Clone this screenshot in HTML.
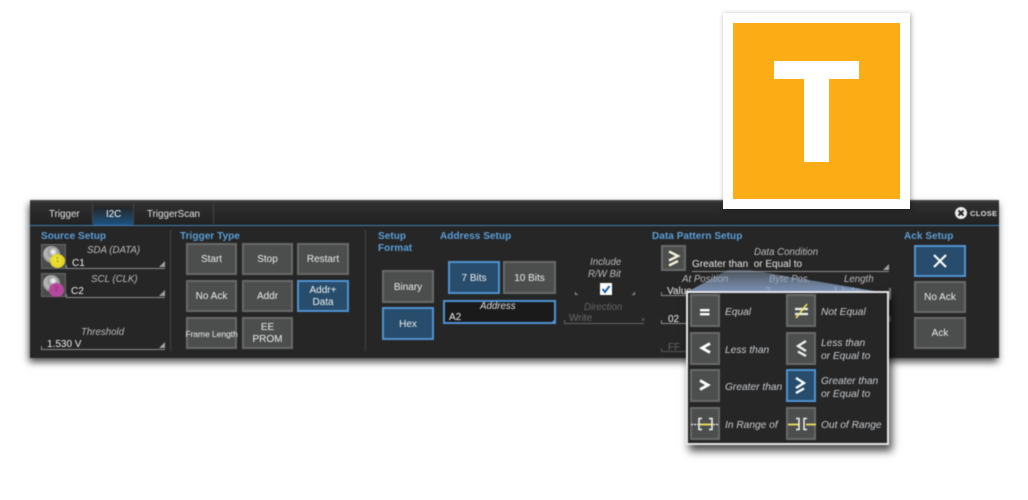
<!DOCTYPE html>
<html><head><meta charset="utf-8">
<style>
html,body{margin:0;padding:0;background:#fff}
body{width:1028px;height:500px;overflow:hidden;position:relative;font-family:"Liberation Sans",sans-serif}
div,span{position:absolute;box-sizing:border-box}
#blur{left:0;top:0;width:1028px;height:500px;filter:blur(.5px)}
.panel{left:30px;top:200px;width:969px;height:158px;background:#262626;box-shadow:-1px 4px 7px rgba(0,0,0,.7)}
.tabbar{left:30px;top:200px;width:969px;height:26px;background:linear-gradient(#4a4a4a,#303030 12%,#272727 60%,#222);border-bottom:1px solid #3f7fb5}
.t{white-space:nowrap;font-size:9.8px;color:#e4e4e4;line-height:12px;margin-top:1px}
.h{white-space:nowrap;font-size:10px;font-weight:bold;color:#5a9fd8;line-height:12px;letter-spacing:.05px;margin-top:1px}
.l{white-space:nowrap;font-size:9.7px;font-style:italic;color:#bbb;line-height:12px;text-align:center;margin-top:1px}
.v{white-space:nowrap;font-size:10px;color:#f0f0f0;line-height:12px;margin-top:1px}
.b{background:#4c4e4e;border:2px solid #686a6a;color:#ececec;font-size:10px;line-height:12px;padding-top:2px;display:flex;align-items:center;justify-content:center;text-align:center;white-space:pre}
.a{background:#284d6c;border:2px solid #5092d2;color:#f0f0f0}
.u{height:4px;border-left:1px solid #8c8c8c;border-bottom:1px solid #8c8c8c}
.c{width:0;height:0;border-left:6px solid transparent;border-bottom:6px solid #a0a0a0}
.sep{width:1px;background:#454545}
.pl{white-space:nowrap;font-size:10.2px;font-style:italic;color:#c8ccd0;line-height:13px;margin-top:1px}
.g{font-size:16px;font-weight:bold;color:#fff}
.n{font-size:7px;color:#a08a10;line-height:8px;text-align:center}
</style></head><body>
<div id="blur">
<div class="panel"></div>
<div class="tabbar"></div>
<div style="left:93px;top:207px;width:40px;height:18px;background:linear-gradient(#252525,#1d5485)"></div>
<div class="sep" style="left:92px;top:203px;height:21px"></div>
<div class="sep" style="left:133px;top:203px;height:21px"></div>
<div class="sep" style="left:213px;top:203px;height:21px"></div>
<span class="t" style="left:49px;top:208px">Trigger</span>
<span class="t" style="left:106px;top:208px;color:#fff">I2C</span>
<span class="t" style="left:147px;top:208px">TriggerScan</span>
<svg style="position:absolute;left:955px;top:207px" width="13" height="13"><circle cx="6" cy="6" r="6" fill="#eee"/><path d="M3.5 3.5l5 5M8.5 3.5l-5 5" stroke="#222" stroke-width="2"/></svg>
<span style="left:970px;top:209px;font-size:7.5px;font-weight:bold;color:#ddd;line-height:10px;letter-spacing:.3px">CLOSE</span>

<span class="h" style="left:41px;top:230px">Source Setup</span>
<span class="h" style="left:180px;top:230px">Trigger Type</span>
<span class="h" style="left:378px;top:230px">Setup</span>
<span class="h" style="left:378px;top:242px">Format</span>
<span class="h" style="left:440px;top:230px">Address Setup</span>
<span class="h" style="left:652px;top:230px">Data Pattern Setup</span>
<span class="h" style="left:904px;top:230px">Ack Setup</span>
<div class="sep" style="left:170px;top:230px;height:121px"></div>
<div class="sep" style="left:365px;top:230px;height:121px"></div>

<!-- source -->
<div style="left:41px;top:244px;width:25px;height:25px;background:#4a4c4c;border:1px solid #666"></div>
<div style="left:43px;top:246px;width:17px;height:17px;border-radius:50%;background:radial-gradient(circle at 60% 35%,#eee 8%,#999 30%,#bbb 55%,#666 90%)"></div>
<div class="n" style="left:50px;top:254px;width:15px;height:14px;border-radius:50%;background:radial-gradient(circle at 45% 45%,#f2e93a,#d8c61a);padding-top:3px">1</div>
<div style="left:41px;top:273px;width:25px;height:24px;background:#4a4c4c;border:1px solid #666"></div>
<div style="left:43px;top:275px;width:17px;height:17px;border-radius:50%;background:radial-gradient(circle at 60% 35%,#eee 8%,#999 30%,#bbb 55%,#666 90%)"></div>
<div class="n" style="left:49px;top:283px;width:15px;height:14px;border-radius:50%;background:#b8489f;padding-top:3px;color:#7c2c6c">2</div>
<span class="l" style="left:87px;top:244px">SDA (DATA)</span>
<span class="v" style="left:72px;top:257px">C1</span>
<div class="u" style="left:66px;top:265px;width:99px"></div>
<div class="c" style="left:159px;top:261px"></div>
<span class="l" style="left:91px;top:273px">SCL (CLK)</span>
<span class="v" style="left:71px;top:285px">C2</span>
<div class="u" style="left:66px;top:294px;width:99px"></div>
<div class="c" style="left:159px;top:290px"></div>
<span class="l" style="left:81px;top:326px">Threshold</span>
<span class="v" style="left:47px;top:338px">1.530 V</span>
<div class="u" style="left:41px;top:346px;width:124px"></div>
<div class="c" style="left:159px;top:342px"></div>

<!-- trigger type -->
<div class="b" style="left:186px;top:243px;width:51px;height:32px">Start</div>
<div class="b" style="left:242px;top:243px;width:51px;height:32px">Stop</div>
<div class="b" style="left:297px;top:243px;width:52px;height:32px">Restart</div>
<div class="b" style="left:186px;top:280px;width:51px;height:32px">No Ack</div>
<div class="b" style="left:242px;top:280px;width:51px;height:32px">Addr</div>
<div class="b a" style="left:297px;top:280px;width:52px;height:32px">Addr+
Data</div>
<div class="b" style="left:186px;top:317px;width:51px;height:32px;font-size:8.6px;letter-spacing:-.1px">Frame Length</div>
<div class="b" style="left:242px;top:317px;width:51px;height:32px">EE
PROM</div>

<!-- format -->
<div class="b" style="left:382px;top:270px;width:52px;height:33px">Binary</div>
<div class="b a" style="left:382px;top:307px;width:52px;height:33px">Hex</div>
<div class="b a" style="left:448px;top:261px;width:52px;height:33px">7 Bits</div>
<div class="b" style="left:503px;top:261px;width:53px;height:33px">10 Bits</div>
<div style="left:443px;top:300px;width:113px;height:24px;background:#1a1a1a;border:2px solid #5092d2"></div>
<div class="c" style="left:550px;top:318px;border-bottom-color:#5092d2"></div>
<span class="l" style="left:480px;top:300px;color:#e0e0e0">Address</span>
<span class="v" style="left:449px;top:311px">A2</span>

<span class="l" style="left:590px;top:256px">Include</span>
<span class="l" style="left:588px;top:268px">R/W Bit</span>
<div style="left:600px;top:283px;width:12px;height:12px;background:#fff"></div>
<svg style="position:absolute;left:600px;top:283px" width="12" height="12"><path d="M2.5 6l2.5 3 4.5-6" fill="none" stroke="#1c5fa8" stroke-width="2"/></svg>
<div style="left:575px;top:292px;width:3px;height:3px;border-left:1px solid #999;border-bottom:1px solid #999"></div>
<div style="left:632px;top:292px;width:3px;height:3px;border-right:1px solid #999;border-bottom:1px solid #999"></div>
<span class="l" style="left:584px;top:301px;color:#666">Direction</span>
<span class="t" style="left:569px;top:312px;color:#6a6a6a;font-size:10px">Write</span>
<div class="u" style="left:564px;top:320px;width:80px;border-color:#666"></div>
<span style="left:641px;top:317px;font-size:7px;line-height:8px;color:#777">×</span>

<!-- data pattern -->
<div class="b" style="left:661px;top:245px;width:25px;height:26px"></div>
<svg style="position:absolute;left:661px;top:245px" width="25" height="26"><path d="M8 6.5l9 4.5-9 4.5M8 20.5l9-4.5" fill="none" stroke="#f4f4d8" stroke-width="2.4"/></svg>
<span class="l" style="left:754px;top:246px">Data Condition</span>
<span class="v" style="left:692px;top:258px;color:#e8e8e8">Greater than&nbsp; or Equal to</span>
<div class="u" style="left:692px;top:268px;width:197px;border-left:0"></div>
<div class="c" style="left:883px;top:264px"></div>
<span class="l" style="left:682px;top:273px">At Position</span>
<span class="l" style="left:769px;top:273px">Byte Pos.</span>
<span class="l" style="left:844px;top:273px">Length</span>
<span class="v" style="left:667px;top:285px">Value</span>
<span class="v" style="left:765px;top:285px">2</span>
<span class="v" style="left:833px;top:285px">1 byte</span>
<div class="u" style="left:661px;top:292px;width:34px"></div>
<div class="u" style="left:661px;top:320px;width:25px"></div>
<span class="v" style="left:668px;top:313px">02</span>
<div class="u" style="left:661px;top:348px;width:25px;border-color:#555"></div>
<span class="t" style="left:668px;top:341px;color:#666">FF</span>
<div style="left:889px;top:288px;width:2px;height:12px;background:#777"></div>
<div style="left:889px;top:316px;width:2px;height:6px;background:#666"></div>

<!-- ack -->
<div class="b a" style="left:914px;top:245px;width:52px;height:32px"></div>
<svg style="position:absolute;left:914px;top:245px" width="52" height="32"><path d="M20 10l12 12M32 10l-12 12" stroke="#fff" stroke-width="2"/></svg>
<div class="b" style="left:914px;top:281px;width:52px;height:32px">No Ack</div>
<div class="b" style="left:914px;top:317px;width:52px;height:32px">Ack</div>

<!-- pointer wedge -->
<svg style="position:absolute;left:680px;top:268px" width="220" height="26"><defs><linearGradient id="w" x1="0" y1="0" x2="0" y2="1"><stop offset="0" stop-color="#8ea2bc" stop-opacity=".35"/><stop offset="1" stop-color="#86a2cc" stop-opacity=".9"/></linearGradient></defs><polygon points="7,24 48,2 70,2 200,24" fill="url(#w)"/></svg>

<!-- popup -->
<div style="left:686px;top:291px;width:203px;height:154px;background:#262626;border:2px solid #e4e6ea;box-shadow:3px 6px 8px rgba(0,0,0,.7)"></div>
<div class="b g" style="left:690px;top:294px;width:30px;height:33px"></div>
<svg style="position:absolute;left:690px;top:294px" width="30" height="33"><path d="M10 15h9.500v2.400H10zM10 19h9.500v2.400H10z" fill="#fff"/></svg>
<div class="b g" style="left:786px;top:294px;width:30px;height:33px"></div>
<svg style="position:absolute;left:786px;top:294px" width="30" height="33"><path d="M9 15h13M9 20h13" stroke="#f0f0f0" stroke-width="2.2"/><path d="M21 10l-11 14" stroke="#f2e65a" stroke-width="1.6"/></svg>
<div class="b g" style="left:690px;top:332px;width:30px;height:33px"></div>
<svg style="position:absolute;left:690px;top:332px" width="30" height="33"><path d="M20 11.500l-8 4.500 8 4.500" fill="none" stroke="#fff" stroke-width="2.800"/></svg>
<div class="b g" style="left:786px;top:332px;width:30px;height:33px"></div>
<svg style="position:absolute;left:786px;top:332px" width="30" height="33"><path d="M20 9l-8 5 8 5M12 19.500l8 4.500" fill="none" stroke="#f0f0f0" stroke-width="2.300"/></svg>
<div class="b g" style="left:690px;top:369px;width:30px;height:33px"></div>
<svg style="position:absolute;left:690px;top:369px" width="30" height="33"><path d="M10 11.500l8 4.500-8 4.500" fill="none" stroke="#fff" stroke-width="2.800"/></svg>
<div class="b a g" style="left:786px;top:369px;width:30px;height:33px"></div>
<svg style="position:absolute;left:786px;top:369px" width="30" height="33"><path d="M10 9l8 5-8 5M18 19.500l-8 4.500" fill="none" stroke="#fff" stroke-width="2.300"/></svg>
<div class="b g" style="left:690px;top:407px;width:30px;height:33px"></div>
<svg style="position:absolute;left:690px;top:407px" width="30" height="33"><path d="M9 17.500h13" stroke="#f2e65a" stroke-width="1.800"/><path d="M12 11.500H9v11h3M19 11.500h3v11h-3" fill="none" stroke="#f4f4f4" stroke-width="1.500"/><path d="M1 17.500h7M23 17.500h6" stroke="#f4f4f4" stroke-width="1.200" stroke-dasharray="2 1"/></svg>
<div class="b g" style="left:786px;top:407px;width:30px;height:33px"></div>
<svg style="position:absolute;left:786px;top:407px" width="30" height="33"><path d="M2 17.500h11M20 17.500h10" stroke="#f2e65a" stroke-width="1.800"/><path d="M10 11.500h3v11h-3M21 11.500h-3v11h3" fill="none" stroke="#f4f4f4" stroke-width="1.500"/></svg>
<span class="pl" style="left:725px;top:305px">Equal</span>
<span class="pl" style="left:821px;top:305px">Not Equal</span>
<span class="pl" style="left:725px;top:343px">Less than</span>
<span class="pl" style="left:821px;top:336px">Less than<br>or Equal to</span>
<span class="pl" style="left:725px;top:380px">Greater than</span>
<span class="pl" style="left:821px;top:374px">Greater than<br>or Equal to</span>
<span class="pl" style="left:725px;top:418px">In Range of</span>
<span class="pl" style="left:821px;top:418px">Out of Range</span>
</div>

<!-- T icon -->
<div style="left:723px;top:13px;width:187px;height:196px;background:#fff;box-shadow:1px 1px 5px rgba(0,0,0,.35)"></div>
<div style="left:733px;top:23px;width:167px;height:176px;background:#fcad16"></div>
<div style="left:774px;top:61px;width:85px;height:18px;background:#fff"></div>
<div style="left:804px;top:79px;width:25px;height:83px;background:#fff"></div>
</body></html>
